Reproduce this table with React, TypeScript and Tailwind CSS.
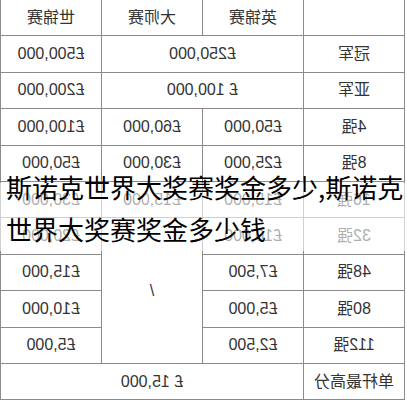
type Cell = { text: string; colSpan?: number; rowSpan?: number };

const rows: { label: string; cells: Cell[]; faded?: boolean }[] = [
  { label: "冠军", cells: [{ text: "£250,000", colSpan: 2 }, { text: "£500,000" }] },
  { label: "亚军", cells: [{ text: "£ 100,000", colSpan: 2 }, { text: "£200,000" }] },
  { label: "4强", cells: [{ text: "£50,000" }, { text: "£60,000" }, { text: "£100,000" }] },
  { label: "8强", cells: [{ text: "£25,000" }, { text: "£30,000" }, { text: "£50,000" }] },
  { label: "16强", cells: [{ text: "£15,000" }, { text: "£15,000" }, { text: "£30,000" }] },
  { label: "32强", cells: [{ text: "£10,000" }, { text: "/", rowSpan: 4 }, { text: "£20,000" }] },
  { label: "48强", cells: [{ text: "£7,500" }, { text: "£15,000" }] },
  { label: "80强", cells: [{ text: "£5,000" }, { text: "£10,000" }] },
  { label: "112强", cells: [{ text: "£2,500" }, { text: "£5,000" }] },
  { label: "单杆最高分", cells: [{ text: "£ 15,000", colSpan: 3 }] },
];

const td = "border border-[#8a8a8a] text-center align-middle p-0";

export default function App() {
  return (
    <div className="relative w-[407px] h-[400px] overflow-hidden bg-white">
      {/* the source picture is mirrored */}
      <div className="[transform:scaleX(-1)]">
        <table className="ml-auto w-[405px] -mt-px border-collapse table-fixed text-[16px] text-[#333] font-['Liberation_Sans','Noto_Sans_CJK_SC',sans-serif]">
          <tbody>
            <tr className="h-[36.4px]">
              <td className={td}></td>
              <td className={td}>英锦赛</td>
              <td className={td}>大师赛</td>
              <td className={td}>世锦赛</td>
            </tr>
            {rows.map((r) => (
              <tr key={r.label} className="h-[36.4px]">
                <td className={td}>{r.label}</td>
                {r.cells.map((c, i) => (
                  <td key={i} colSpan={c.colSpan} rowSpan={c.rowSpan} className={td}>
                    {c.text}
                  </td>
                ))}
              </tr>
            ))}
          </tbody>
        </table>
      </div>

      <div className="absolute inset-x-0 top-[183px] h-[68px] bg-white/60" />
      <div className="absolute left-[6px] top-[166px] w-[401px] text-[26px] leading-[42px] text-black font-['Noto_Sans_CJK_SC',sans-serif]">
        斯诺克世界大奖赛奖金多少,斯诺克世界大奖赛奖金多少钱
      </div>
    </div>
  );
}
